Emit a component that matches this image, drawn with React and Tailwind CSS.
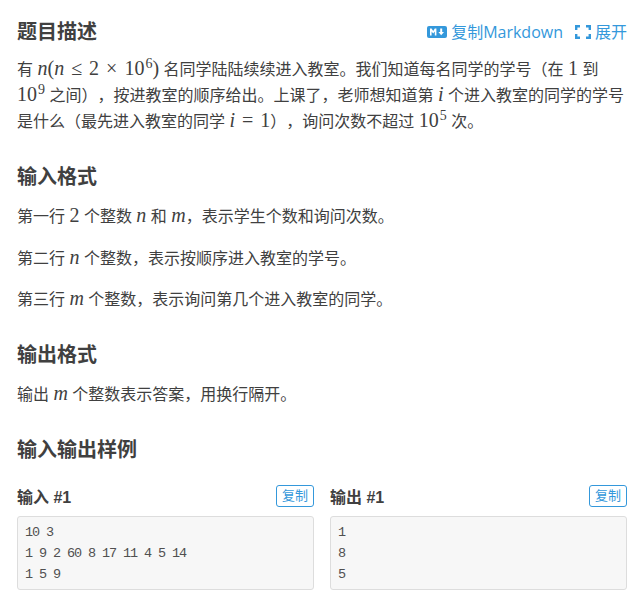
function M({ children }) {
  return <span className="font-['Liberation_Serif',serif] text-[20px] leading-none italic">{children}</span>;
}

function N({ children }) {
  return <span className="font-['Liberation_Serif',serif] text-[20px] leading-none">{children}</span>;
}

function Op({ children }) {
  return <span className="mx-[7px] font-['Liberation_Serif',serif] text-[20px] leading-none">{children}</span>;
}

function Sup({ children }) {
  return <span className="relative -top-[7px] ml-px font-['Liberation_Serif',serif] text-[14px] leading-none">{children}</span>;
}

function H({ children, className }) {
  return <h2 className={"text-[20px] leading-[26px] font-bold text-[#404040] " + className}>{children}</h2>;
}

function P({ children, className }) {
  return <p className={"text-[16px] leading-[26px] [text-spacing-trim:space-all] " + className}>{children}</p>;
}

function Sample({ title, lines }) {
  return (
    <div>
      <div className="flex h-[22px] items-center justify-between">
        <span className="pt-[4px] text-[16px] font-bold text-[#404040]">{title}</span>
        <button className="h-[22px] w-[38px] rounded-[3px] border border-[#3498db] text-[13px] leading-[20px] text-[#3498db]">复制</button>
      </div>
      <pre className="mt-[9px] h-[74px] rounded-[3px] border border-[#dddddd] bg-[#f7f7f7] px-[7px] py-[5px] font-['Liberation_Mono',monospace] text-[13.5px] leading-[21px] tracking-[-1.1px] text-[#505050]">
        {lines.join("\n")}
      </pre>
    </div>
  );
}

export default function App() {
  return (
    <div className="h-[601px] w-[643px] overflow-hidden bg-white pt-[19px] pr-[16px] pl-[17px] font-['Liberation_Sans','Noto_Sans_CJK_SC',sans-serif] text-[#404040]">
      <div className="flex items-center justify-between">
        <H>题目描述</H>
        <div className="flex items-center font-['Open_Sans','Noto_Sans_CJK_SC',sans-serif] text-[16px] text-[#3498db]">
          <svg width="20" height="12" viewBox="0 0 20 12" className="mr-[4px]">
            <rect width="20" height="12" rx="2" fill="#3498db" />
            <path d="M3 9.5V2.5h1.6L6.2 5l1.6-2.5H9.4v7H7.8V5.4L6.2 7.6 4.6 5.4v4.1z" fill="#fff" />
            <path d="M13.2 2.5h2v3.4H17l-2.8 3.4-2.8-3.4h1.8z" fill="#fff" />
          </svg>
          <span>复制Markdown</span>
          <svg width="16" height="14" viewBox="0 0 16 14" className="mr-[4px] ml-[12px]" fill="none" stroke="#3498db" strokeWidth="2.4">
            <path d="M5 1.2H1.2V5M11 1.2h3.8V5M5 12.8H1.2V9M11 12.8h3.8V9" />
          </svg>
          <span>展开</span>
        </div>
      </div>

      <P className="mt-[12px]">
        有 <M>n</M><N>(</N><M>n</M><Op>≤</Op><N>2</N><Op>×</Op><N>10</N><Sup>6</Sup><N>)</N> 名同学陆陆续续进入教室。我们知道每名同学的学号（在 <N>1</N> 到
        <br />
        <N>10</N><Sup>9</Sup> 之间），按进教室的顺序给出。上课了，老师想知道第 <M>i</M> 个进入教室的同学的学号
        <br />
        是什么（最先进入教室的同学 <M>i</M><Op>=</Op><N>1</N>），询问次数不超过 <N>10</N><Sup>5</Sup> 次。
      </P>

      <H className="mt-[29px]">输入格式</H>
      <P className="mt-[14px]">第一行 <N>2</N> 个整数 <M>n</M> 和 <M>m</M>，表示学生个数和询问次数。</P>
      <P className="mt-[16px]">第二行 <M>n</M> 个整数，表示按顺序进入教室的学号。</P>
      <P className="mt-[15px]">第三行 <M>m</M> 个整数，表示询问第几个进入教室的同学。</P>

      <H className="mt-[29px]">输出格式</H>
      <P className="mt-[14px]">输出 <M>m</M> 个整数表示答案，用换行隔开。</P>

      <H className="mt-[29px]">输入输出样例</H>
      <div className="mt-[22px] grid grid-cols-2 gap-[16px]">
        <Sample title="输入 #1" lines={["10 3", "1 9 2 60 8 17 11 4 5 14", "1 5 9"]} />
        <Sample title="输出 #1" lines={["1", "8", "5"]} />
      </div>
    </div>
  );
}
